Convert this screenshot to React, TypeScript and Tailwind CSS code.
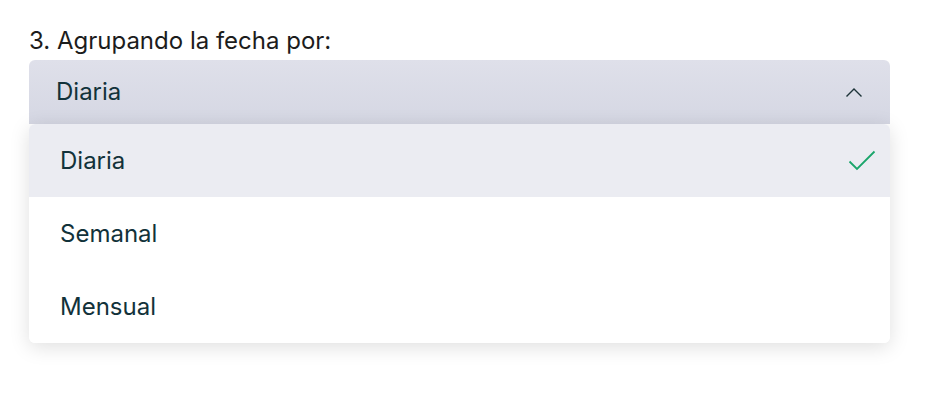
import React from "react";

export default function App() {
  const items = ["Diaria", "Semanal", "Mensual"];
  return (
    <div className="w-[936px] h-[402px] bg-white pl-[29px] pr-[46px] pt-[25px]" style={{ fontFamily: "Inter, 'Noto Sans', sans-serif" }}>
      <div className="text-[24px] leading-[32px] text-[#1c1c1c]">3. Agrupando la fecha por:</div>
      <div className="mt-[3px] relative">
        <div className="h-[64px] rounded-t-[6px] bg-gradient-to-b from-[#dfe0ea] to-[#d5d7e3] flex items-center justify-between pl-[27px] pr-[27px]">
          <span className="text-[24px] text-[#12323a]">Diaria</span>
          <svg width="18" height="11" viewBox="0 0 18 11" fill="none">
            <path d="M1.5 9.5 L9 2 L16.5 9.5" stroke="#1d3338" strokeWidth="1.4" />
          </svg>
        </div>
        <div className="rounded-[6px] bg-white shadow-[0_4px_20px_rgba(0,0,0,0.13)] overflow-hidden">
          {items.map((it, i) => (
            <div
              key={it}
              className={`h-[73px] flex items-center justify-between pl-[31px] pr-[14px] ${i === 0 ? "bg-[#ebecf2]" : "bg-white"}`}
            >
              <span className="text-[24px] text-[#12323a]">{it}</span>
              {i === 0 && (
                <svg width="28" height="22" viewBox="0 0 28 22" fill="none">
                  <path d="M1.5 11.5 L9 19 L26.5 1.5" stroke="#1aa56b" strokeWidth="1.8" />
                </svg>
              )}
            </div>
          ))}
        </div>
      </div>
    </div>
  );
}
